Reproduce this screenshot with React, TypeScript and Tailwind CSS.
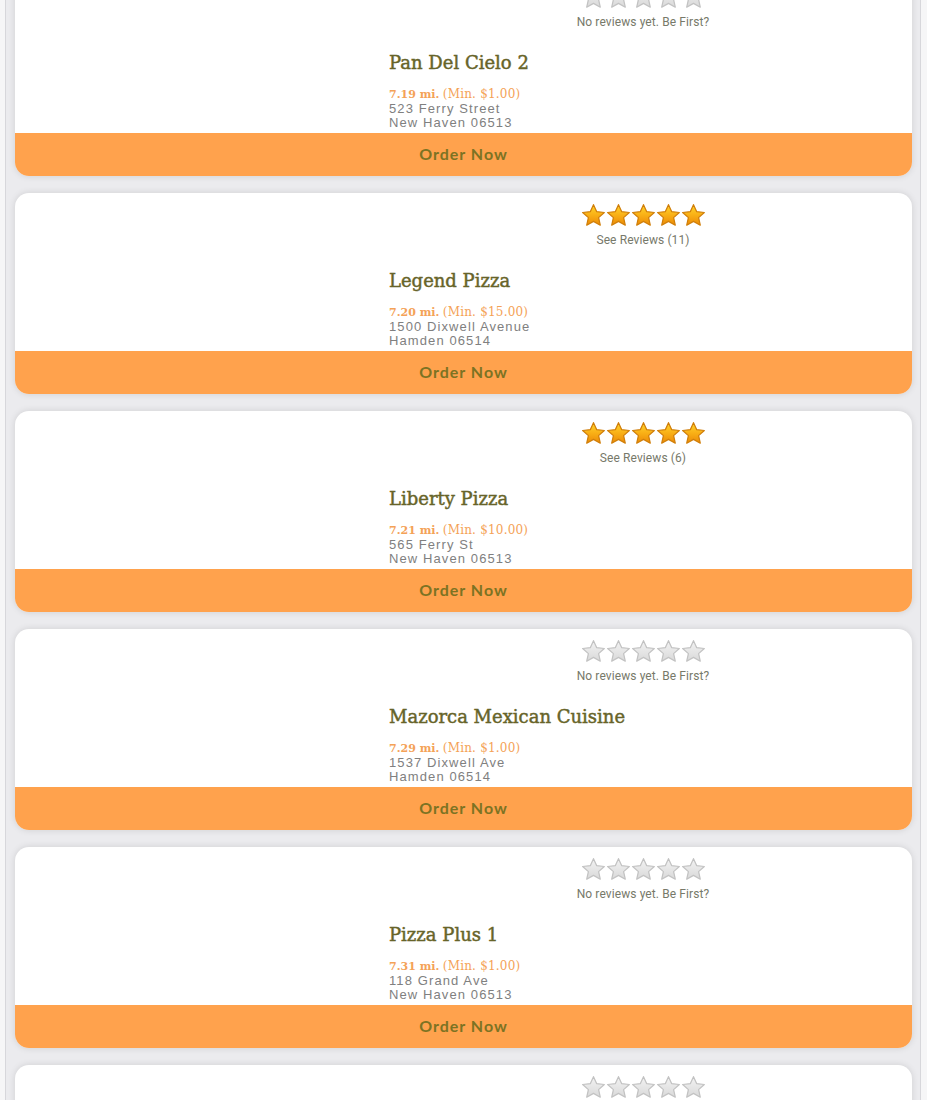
import { useId } from "react";

type Shop = {
  name: string;
  miles: string;
  min: string;
  street: string;
  city: string;
  reviews: number;
};

const SHOPS: Shop[] = [
  { name: "Pan Del Cielo 2", miles: "7.19", min: "1.00", street: "523 Ferry Street", city: "New Haven 06513", reviews: 0 },
  { name: "Legend Pizza", miles: "7.20", min: "15.00", street: "1500 Dixwell Avenue", city: "Hamden 06514", reviews: 11 },
  { name: "Liberty Pizza", miles: "7.21", min: "10.00", street: "565 Ferry St", city: "New Haven 06513", reviews: 6 },
  { name: "Mazorca Mexican Cuisine", miles: "7.29", min: "1.00", street: "1537 Dixwell Ave", city: "Hamden 06514", reviews: 0 },
  { name: "Pizza Plus 1", miles: "7.31", min: "1.00", street: "118 Grand Ave", city: "New Haven 06513", reviews: 0 },
  { name: "Pizza Palace", miles: "7.34", min: "1.00", street: "101 Main St", city: "Hamden 06514", reviews: 0 },
];

const STAR =
  "M12 1.6 L15.1 8.3 L22.4 9.1 L16.9 14 L18.5 21.3 L12 17.6 L5.5 21.3 L7.1 14 L1.6 9.1 L8.9 8.3 Z";

function Star({ filled }: { filled: boolean }) {
  const id = useId();
  return (
    <svg width="25" height="24" viewBox="0 0 24 23" aria-hidden>
      <defs>
        <linearGradient id={id} x1="0" y1="0" x2="0" y2="1">
          {filled ? (
            <>
              <stop offset="0" stopColor="#ffd62e" />
              <stop offset="0.5" stopColor="#f9b016" />
              <stop offset="1" stopColor="#ec8a06" />
            </>
          ) : (
            <>
              <stop offset="0" stopColor="#f3f3f3" />
              <stop offset="1" stopColor="#d9d9d9" />
            </>
          )}
        </linearGradient>
      </defs>
      <path
        d={STAR}
        fill={`url(#${id})`}
        stroke={filled ? "#d07e08" : "#c2c2c2"}
        strokeWidth="1.2"
        strokeLinejoin="round"
      />
    </svg>
  );
}

function ShopCard({ shop }: { shop: Shop }) {
  const rated = shop.reviews > 0;
  return (
    <div className="w-[897px] h-[201px] flex flex-col rounded-[14px] bg-white shadow-[0_0_7px_rgba(0,0,0,0.12)] overflow-hidden">
      <div className="h-[158px] flex">
        <div className="w-[374px]" />
        <div className="w-[508px] flex flex-col pt-[10px]">
          <div className="flex flex-col items-center">
            <div className="flex">
              {[0, 1, 2, 3, 4].map((i) => (
                <Star key={i} filled={rated} />
              ))}
            </div>
            <p className="mt-[6px] text-[12px] leading-[14px] text-[#77796a] font-['Roboto',sans-serif] tracking-[0.1px]">
              {rated ? `See Reviews (${shop.reviews})` : "No reviews yet. Be First?"}
            </p>
          </div>
          <h2 className="mt-[22px] text-[18px] leading-[24px] text-[#676429] font-['DejaVu_Serif',serif] [-webkit-text-stroke:0.45px_#676429]">
            {shop.name}
          </h2>
          <p className="mt-[12px] text-[11px] leading-[14px] text-[#f4a257] font-['DejaVu_Serif',serif]">
            <span className="font-bold">{shop.miles} mi.</span>{" "}
            <span className="text-[12px] tracking-[0.2px]">(Min. ${shop.min})</span>
          </p>
          <p className="text-[13px] leading-[14px] text-[#808080] tracking-[1.1px] font-['Liberation_Sans',sans-serif]">
            {shop.street}
          </p>
          <p className="text-[13px] leading-[14px] text-[#808080] tracking-[1.1px] font-['Liberation_Sans',sans-serif]">
            {shop.city}
          </p>
        </div>
      </div>
      <button
        type="button"
        className="h-[43px] pb-[2px] bg-[#ffa24d] text-[#7c7323] text-[16px] font-bold tracking-[1px] font-['Lato',sans-serif]"
      >
        Order Now
      </button>
    </div>
  );
}

export default function App() {
  return (
    <div className="min-h-[1100px] bg-[#f6f6f7] overflow-hidden">
      <div className="ml-[5px] w-[916px] min-h-[1100px] bg-[#ebebee] border-x border-[#d7d7db] pl-[9px]">
        <div className="-mt-[25px] flex flex-col gap-[17px]">
          {SHOPS.map((shop) => (
            <ShopCard key={shop.name} shop={shop} />
          ))}
        </div>
      </div>
    </div>
  );
}
